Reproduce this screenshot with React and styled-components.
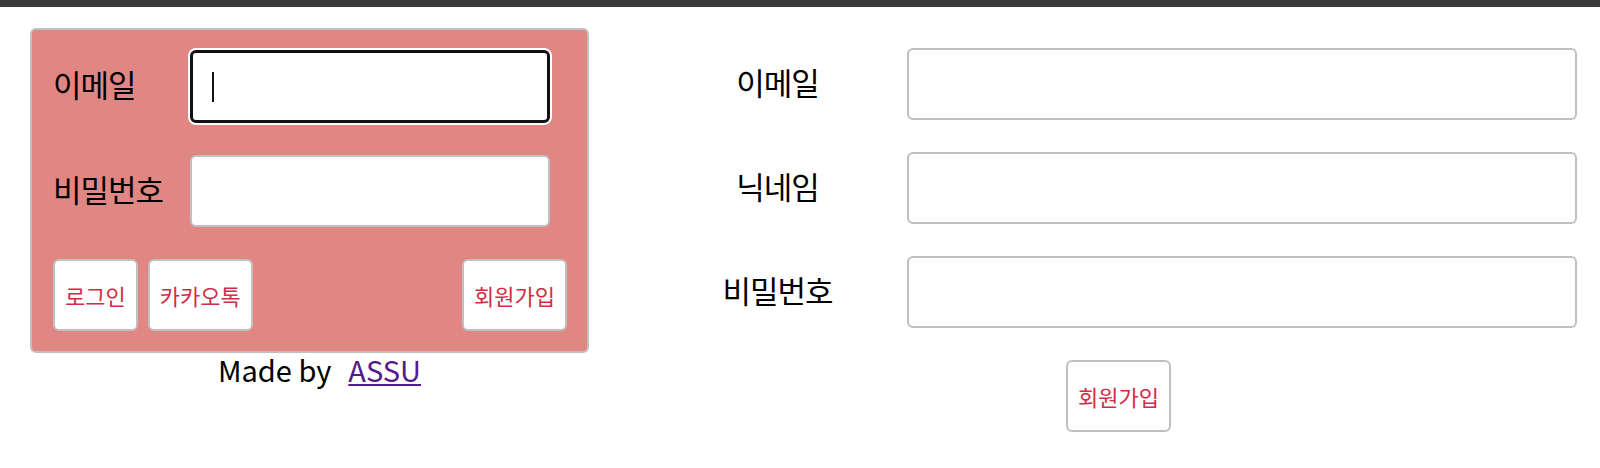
import React from "react";
import styled, { createGlobalStyle } from "styled-components";

const GlobalStyle = createGlobalStyle`
  body {
    margin: 0;
    background: #ffffff;
    font-family: "Noto Sans CJK KR", "Noto Sans", sans-serif;
  }
`;

const TopBar = styled.div`
  height: 7px;
  background: #3a3a3a;
`;

const Page = styled.div`
  display: flex;
  align-items: flex-start;
  gap: 71px;
  padding: 21px 23px 0 30px;
`;

const LeftColumn = styled.div`
  width: 559px;
  flex-shrink: 0;
`;

const Card = styled.form`
  box-sizing: border-box;
  display: flex;
  flex-direction: column;
  gap: 32px;
  padding: 20px 20px 20px 21px;
  background: #e08784;
  border: 2px solid #c0c0c0;
  border-radius: 6px;
`;

const Row = styled.div`
  display: flex;
  align-items: center;
`;

const Label = styled.label`
  width: 137px;
  padding-bottom: 6px;
  font-size: 31px;
  letter-spacing: -1px;
  color: #000;
  line-height: 1;
`;

const InputWrap = styled.div`
  position: relative;
`;

const Input = styled.input`
  box-sizing: border-box;
  display: block;
  width: ${(p) => p.$width || "360px"};
  height: ${(p) => p.$height || "72px"};
  padding: 0 20px;
  font-size: 26px;
  font-family: inherit;
  background: #fff;
  border: ${(p) => (p.$focused ? "3px solid #111" : "2px solid #c0c0c0")};
  border-radius: 6px;
  box-shadow: ${(p) => (p.$focused ? "0 0 0 2px #fff" : "none")};
  outline: none;
`;

const Caret = styled.span`
  position: absolute;
  left: 22px;
  top: 22px;
  width: 2px;
  height: 30px;
  background: #111;
`;

const ButtonRow = styled.div`
  display: flex;
  gap: 10px;
`;

const Button = styled.button`
  box-sizing: border-box;
  height: 72px;
  padding: 0 10px;
  margin-left: ${(p) => (p.$pushRight ? "auto" : "0")};
  font-family: inherit;
  font-size: 22px;
  color: #d12c48;
  background: #fff;
  border: 2px solid #c0c0c0;
  border-radius: 6px;
`;

const Footer = styled.p`
  margin: 0;
  padding-left: 20px;
  text-align: center;
  font-size: 29px;
  line-height: 32px;
  color: #000;
`;

const Link = styled.a`
  margin-left: 17px;
  color: #551a8b;
  text-decoration: underline;
`;

const SignupForm = styled.form`
  flex: 1;
  display: grid;
  grid-template-columns: 235px 1fr;
  column-gap: 12px;
  row-gap: 32px;
  align-items: center;
  padding-top: 20px;
`;

const SignupLabel = styled(Label)`
  width: auto;
  text-align: center;
`;

const SignupButtonCell = styled.div`
  grid-column: 1 / -1;
  display: flex;
  justify-content: center;
`;

function App() {
  return (
    <>
      <GlobalStyle />
      <TopBar />
      <Page>
        <LeftColumn>
          <Card onSubmit={(e) => e.preventDefault()}>
            <Row>
              <Label>이메일</Label>
              <InputWrap>
                <Input $focused $height="73px" />
                <Caret />
              </InputWrap>
            </Row>
            <Row>
              <Label>비밀번호</Label>
              <Input type="password" />
            </Row>
            <ButtonRow>
              <Button type="button">로그인</Button>
              <Button type="button">카카오톡</Button>
              <Button type="button" $pushRight>
                회원가입
              </Button>
            </ButtonRow>
          </Card>
          <Footer>
            Made by<Link href="#">ASSU</Link>
          </Footer>
        </LeftColumn>
        <SignupForm onSubmit={(e) => e.preventDefault()}>
          <SignupLabel>이메일</SignupLabel>
          <Input $width="100%" />
          <SignupLabel>닉네임</SignupLabel>
          <Input $width="100%" />
          <SignupLabel>비밀번호</SignupLabel>
          <Input $width="100%" type="password" />
          <SignupButtonCell>
            <Button type="button">회원가입</Button>
          </SignupButtonCell>
        </SignupForm>
      </Page>
    </>
  );
}

export default App;
